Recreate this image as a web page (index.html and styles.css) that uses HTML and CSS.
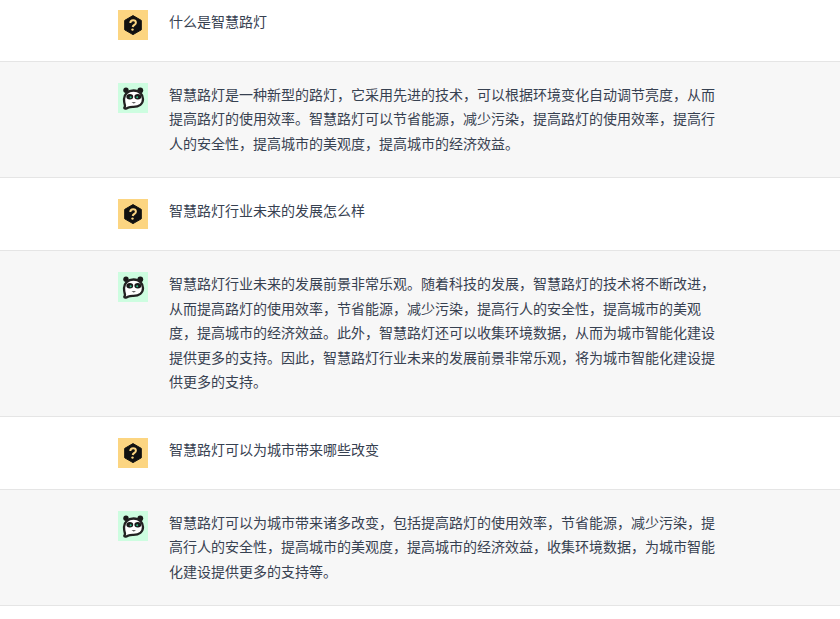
FILE: index.html
```html
<!DOCTYPE html>
<html lang="zh-CN">
<head>
<meta charset="utf-8">
<title>智慧路灯</title>
<link rel="stylesheet" href="styles.css">
</head>
<body>
<svg class="defs" width="0" height="0" aria-hidden="true">
  <symbol id="q" viewBox="0 0 30 30">
    <rect width="30" height="30" fill="#fcd581"/>
    <path d="M15 5.600 23.300 10.400V19.800L15 24.600 6.700 19.800V10.400Z" fill="#111" stroke="#111" stroke-width="1" stroke-linejoin="round"/>
    <path d="M12.300 13C12.400 11.200 13.600 10.300 15.100 10.300 16.700 10.300 17.900 11.300 17.900 12.700 17.900 14.900 15 14.800 14.700 17" fill="none" stroke="#fcd581" stroke-width="2"/>
    <circle cx="14.500" cy="19.600" r="1.200" fill="#fcd581"/>
  </symbol>
  <symbol id="p" viewBox="0 0 30 30">
    <rect width="30" height="30" fill="#cdfde0"/>
    <circle cx="8" cy="7.300" r="2.700" fill="#1a1a1a"/>
    <circle cx="22.300" cy="7.300" r="2.900" fill="#1a1a1a"/>
    <path d="M15.500 7.500C21.500 7.500 25 11.500 25 16 25 21 21 23.900 15.500 23.900 13.500 23.900 12 23.800 10.500 24.600 9 25.400 6.500 26.100 6.300 25.100 6.200 24.400 7 24 7 23 7 22 6 20 6 16 6 11.500 9.800 7.500 15.500 7.500Z" fill="#fff" stroke="#222" stroke-width="2.300"/>
    <ellipse cx="11.800" cy="13.800" rx="3.400" ry="2.700" fill="#1a1a1a"/>
    <ellipse cx="19.800" cy="13.800" rx="3.400" ry="2.700" fill="#1a1a1a"/>
    <circle cx="12.600" cy="14.200" r="1" fill="#2fbf8a"/>
    <circle cx="19.200" cy="14.200" r="1" fill="#2fbf8a"/>
    <path d="M13.500 19.200H18L15.800 20.500Z" fill="#333"/>
  </symbol>
</svg>
<main class="thread">
  <section class="row row-first">
    <div class="inner">
      <svg class="avatar" width="30" height="30"><use href="#q"/></svg>
      <p class="msg">什么是智慧路灯</p>
    </div>
  </section>
  <section class="row row-answer">
    <div class="inner">
      <svg class="avatar" width="30" height="30"><use href="#p"/></svg>
      <p class="msg">智慧路灯是一种新型的路灯，它采用先进的技术，可以根据环境变化自动调节亮度，从而提高路灯的使用效率。智慧路灯可以节省能源，减少污染，提高路灯的使用效率，提高行人的安全性，提高城市的美观度，提高城市的经济效益。</p>
    </div>
  </section>
  <section class="row">
    <div class="inner">
      <svg class="avatar" width="30" height="30"><use href="#q"/></svg>
      <p class="msg">智慧路灯行业未来的发展怎么样</p>
    </div>
  </section>
  <section class="row row-answer">
    <div class="inner">
      <svg class="avatar" width="30" height="30"><use href="#p"/></svg>
      <p class="msg">智慧路灯行业未来的发展前景非常乐观。随着科技的发展，智慧路灯的技术将不断改进，从而提高路灯的使用效率，节省能源，减少污染，提高行人的安全性，提高城市的美观度，提高城市的经济效益。此外，智慧路灯还可以收集环境数据，从而为城市智能化建设提供更多的支持。因此，智慧路灯行业未来的发展前景非常乐观，将为城市智能化建设提供更多的支持。</p>
    </div>
  </section>
  <section class="row">
    <div class="inner">
      <svg class="avatar" width="30" height="30"><use href="#q"/></svg>
      <p class="msg">智慧路灯可以为城市带来哪些改变</p>
    </div>
  </section>
  <section class="row row-answer">
    <div class="inner">
      <svg class="avatar" width="30" height="30"><use href="#p"/></svg>
      <p class="msg">智慧路灯可以为城市带来诸多改变，包括提高路灯的使用效率，节省能源，减少污染，提高行人的安全性，提高城市的美观度，提高城市的经济效益，收集环境数据，为城市智能化建设提供更多的支持等。</p>
    </div>
  </section>
</main>
</body>
</html>
```

FILE: styles.css
```css
html, body {
  margin: 0;
  padding: 0;
  background: #fff;
}
body {
  font-family: "Noto Sans CJK SC", "Liberation Sans", sans-serif;
  font-size: 14px;
  line-height: 24.5px;
  color: #374151;
  overflow: hidden;
}
.defs {
  position: absolute;
}
.row {
  padding: 21px 0;
  border-bottom: 1px solid #e5e5e5;
}
.row-first {
  padding-top: 9.75px;
}
.row-answer {
  background: #f7f7f7;
}
.inner {
  display: flex;
  gap: 21px;
  width: 604px;
  margin-left: 118px;
}
.avatar {
  flex: none;
  display: block;
}
.msg {
  margin: -1px 0 0;
  padding-bottom: 1px;
  flex: 1;
  min-height: 30px;
}
```
